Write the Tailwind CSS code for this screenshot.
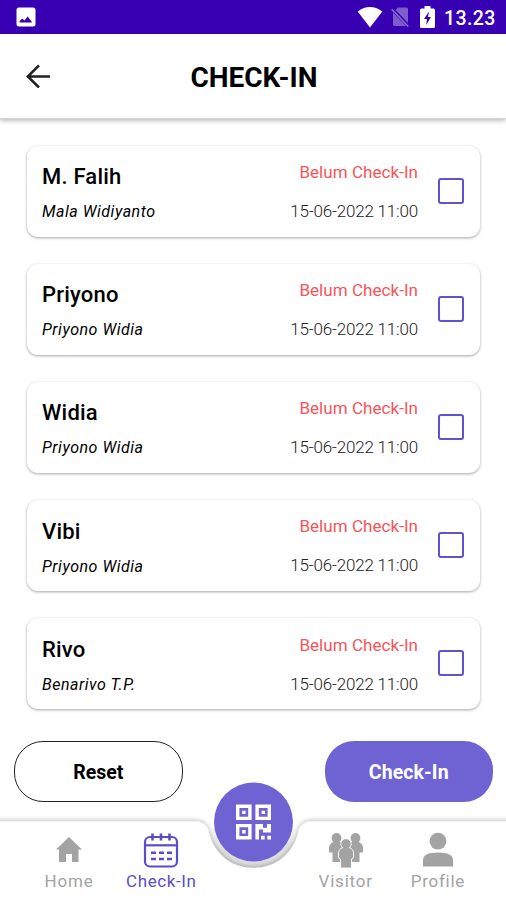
<!DOCTYPE html>
<html lang="id">
<head>
<meta charset="utf-8">
<title>Check-In</title>
<script src="https://cdn.jsdelivr.net/npm/@tailwindcss/browser@4"></script>
</head>
<body class="w-[506px] h-[900px] overflow-hidden bg-white font-['Roboto',sans-serif] text-black">
<div class="flex flex-col w-[506px] h-[900px]">
  <div class="h-[34px] shrink-0 bg-[#3700b3] flex items-center pl-4 pr-[12px] text-white">
    <svg class="w-5 h-5 -mt-px" viewBox="0 0 20 20"><rect x=".5" y=".5" width="19" height="19" rx="2.5" fill="#fff"/><path d="M3.500 15.500V14.500L6 11.500l2.500 2 3.200-4 4.500 6z" fill="#3700b3"/></svg>
    <div class="ml-auto flex items-center">
      <svg class="w-[26px] h-[21px]" viewBox="0 0 26 21"><path d="M.7 4.500Q13-4.300 25.300 4.500L13 20.500z" fill="#fff"/></svg>
      <svg class="w-[18px] h-[22px] ml-[8px]" viewBox="0 0 18 22"><path d="M7 1.500h8.500Q17 1.500 17 3v14L4.500 4zM2 6.500 15 20H3.500Q2 20 2 18.500z" fill="#fff" opacity=".36"/><path d="M.7 3.200 17.300 20.500" stroke="#fff" opacity=".45" stroke-width="1.500"/></svg>
      <svg class="w-[15px] h-[22px] ml-[11px] -mt-px" viewBox="0 0 15 22"><path d="M4.500 0h6v2.500h3Q15 2.500 15 4v16.500Q15 22 13.500 22h-12Q0 22 0 20.500V4Q0 2.500 1.500 2.500h3z" fill="#fff"/><path d="M9 5.500 4 13h3l-.8 6L11 11H8z" fill="#3700b3"/></svg>
      <span class="ml-[9px] w-[50px] text-[19.500px] leading-[34px] font-medium tracking-[.4px] mt-[3px] whitespace-nowrap">13.23</span>
    </div>
  </div>
  <header class="h-[85px] shrink-0 relative z-10 grid grid-cols-[76px_1fr_76px] items-center bg-white border-b border-[#d4d4d4] shadow-[0_2px_4px_rgba(0,0,0,0.25)]">
    <svg class="ml-[26px] w-6 h-6" viewBox="0 0 24 24" fill="none" stroke="#222" stroke-width="2.600"><path d="M24 12.500H2M13 1.300 1.800 12.500 13 23.500"/></svg>
    <h1 class="text-center text-[28px] leading-8 font-bold mt-[3px] ml-[2px]">CHECK-IN</h1>
  </header>
  <main id="list" class="flex flex-col gap-[27.200px] pt-[26.600px] pl-[27px] pr-[26px] h-[622px] shrink-0"></main>
  <div class="flex justify-between pl-[13.500px] pr-[13px] h-[80px]">
    <button class="w-[169.500px] h-[61px] rounded-[29px] border border-[#222] text-[19.500px] font-bold pt-[3px]">Reset</button>
    <button class="w-[168.500px] h-[61px] rounded-[29px] bg-[#6f63d4] text-white text-[19.500px] font-bold pt-[3px] tracking-[.1px]">Check-In</button>
  </div>
  <nav class="relative h-[79px] shrink-0 grid grid-cols-5 pl-[23px] pr-[22px] pt-[10.500px] text-[#a3a3a3] text-[17px] leading-5 tracking-[.8px]">
    <svg class="absolute left-0 -top-[50px] w-[506px] h-[129px]" viewBox="0 0 506 129">
      <defs>
        <filter id="s" x="-5%" y="-30%" width="110%" height="160%"><feDropShadow dx="0" dy="-1.500" stdDeviation="2" flood-color="#000" flood-opacity=".24"/></filter>
        <linearGradient id="rim" gradientUnits="userSpaceOnUse" x1="0" y1="52" x2="0" y2="78"><stop stop-color="#ddd" stop-opacity="0"/><stop offset="1" stop-color="#dedede"/></linearGradient>
      </defs>
      <circle cx="253.500" cy="51" r="47" fill="url(#rim)"/>
      <path d="M-10 50.500H196Q204 50.500 208 58C212 80 229 97 253.500 97S295 80 299 58Q303 50.500 311 50.500H516V140H-10z" fill="#fff" filter="url(#s)"/>
      <circle cx="253.500" cy="51" r="39.500" fill="#6f63d4"/>
      <g transform="translate(236 33.500)"><g fill="none" stroke="#fff" stroke-width="3.400"><path d="M1.700 1.700h12.200v12.200H1.700zM21.100 1.700h12.200v12.200H21.100zM1.700 21.100h12.200v12.200H1.700z"/></g><path d="M6.200 6.200h3.400v3.400H6.200zM25.600 6.200H29v3.400h-3.400zM6.200 25.600h3.400V29H6.200zM19.400 19.400H27v3.800h4v-3.800h4v8.700h-8v-3h-4v9.900h-3.600zM25 31.300h3.700V35H25zM31.300 31.300H35V35h-3.700z" fill="#fff"/></g>
    </svg>
    <a class="relative flex flex-col items-center">
      <svg class="w-[28px] h-9" viewBox="0 0 28 36"><path d="M14 5 27 17.500H23.500V30h-6.500v-8h-6v8H4V17.500H1z" fill="#a3a3a3"/></svg><span class="mt-[3px]">Home</span>
    </a>
    <a class="relative flex flex-col items-center text-[#5a4dcb]">
      <svg class="w-9 h-9" viewBox="0 0 36 36" fill="none" stroke="#5a4dcb" stroke-width="2.200"><rect x="2" y="5" width="32" height="29.500" rx="5"/><path d="M2 13.300h32"/><path d="M9.500 1.500v7M18 1.500v7M26.500 1.500v7" stroke-width="2.600"/><path d="M8 20.700h5m3 0h5m3 0h5M8 27h5m3 0h5m3 0h5" stroke-width="2.500"/></svg><span class="mt-[3px] tracking-[.6px] whitespace-nowrap">Check-In</span>
    </a>
    <span></span>
    <a class="relative flex flex-col items-center">
      <svg class="w-9 h-9" viewBox="0 0 36 36" fill="#a3a3a3"><g id="person"><circle cx="8.500" cy="6" r="4.900"/><path d="M6 9.500h5.500q5 2 5 7v6h-2.500V30H4.500v-9.500H1V16q0-4.500 5-6.500z"/></g><use href="#person" transform="matrix(-1 0 0 1 36 0)"/><g stroke="#fff" stroke-width=".9"><path d="M15 15.500h6q4.500 1.500 4.500 5.500v4q0 2-2 2V36H12.500v-9q-2 0-2-2v-4q0-4 4.500-5.500z"/><circle cx="18" cy="11.800" r="5.200"/></g><path d="M15 14h6v4h-6z"/></svg><span class="mt-[3px]">Visitor</span>
    </a>
    <a class="relative flex flex-col items-center">
      <svg class="w-9 h-9" viewBox="0 0 36 36" fill="#a3a3a3"><circle cx="18" cy="9.200" r="8.400"/><path d="M3 34.500V28q0-7.500 15-7.500T33 28v6.500z"/></svg><span class="mt-[3px] tracking-[.7px]">Profile</span>
    </a>
  </nav>
</div>
<script>
const visitors = [["M. Falih","Mala Widiyanto"],["Priyono","Priyono Widia"],["Widia","Priyono Widia"],["Vibi","Priyono Widia"],["Rivo","Benarivo T.P."]];
document.getElementById("list").innerHTML = visitors.map(([name, host]) => `
  <article class="h-[91px] shrink-0 rounded-[11px] bg-white shadow-[0_1px_3px_rgba(0,0,0,0.36)] flex items-center pl-[15px] pr-4">
    <div class="flex-1 flex flex-col pt-[2px]">
      <h2 class="text-[22px] leading-[30px] font-medium tracking-[.2px]">${name}</h2>
      <p class="mt-[10px] text-[16px] leading-5 italic tracking-[.52px]">${host}</p>
    </div>
    <div class="flex flex-col items-end whitespace-nowrap pt-[.6px]">
      <span class="text-[17px] leading-6 text-[#f9535a] tracking-[.05px]">Belum Check-In</span>
      <span class="mt-[15px] text-[17px] leading-6 font-light text-[#222] tracking-[-.18px]">15-06-2022 11:00</span>
    </div>
    <span class="ml-5 -mt-[.8px] w-[26px] h-[26px] border-2 border-[#5f52cd] rounded-[3px]"></span>
  </article>`).join("");
</script>
</body>
</html>
